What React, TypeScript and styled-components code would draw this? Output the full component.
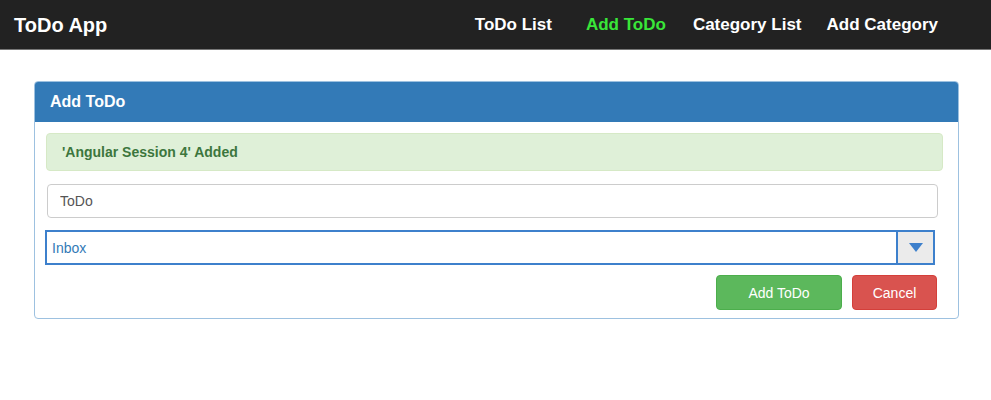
import React from "react";
import styled, { createGlobalStyle } from "styled-components";

const Global = createGlobalStyle`
  html, body { margin: 0; padding: 0; background: #fff; }
  body { font-family: "Liberation Sans", Arial, sans-serif; font-size: 14px; color: #333; }
  * { box-sizing: border-box; }
`;

const NavBar = styled.nav`
  height: 50px;
  background: #222;
  border-bottom: 1px solid #777;
  display: flex;
  align-items: center;
  padding: 1px 0 0 14px;
`;

const Brand = styled.div`
  color: #fff;
  font-weight: bold;
  font-size: 20px;
  flex: 1;
`;

const NavLinks = styled.div`
  display: flex;
  align-items: center;
  padding-right: 53px;
`;

const NavLink = styled.a<{ $active?: boolean; $gap: number }>`
  color: ${(p) => (p.$active ? "#39e639" : "#fff")};
  font-weight: bold;
  font-size: 17px;
  text-decoration: none;
  margin-left: ${(p) => p.$gap}px;
`;

const Container = styled.main`
  padding: 31px 32px 0 34px;
`;

const Panel = styled.section`
  border: 1px solid #9dc1e0;
  border-radius: 4px;
  overflow: hidden;
`;

const PanelHeading = styled.div`
  background: #337ab7;
  color: #fff;
  font-weight: bold;
  font-size: 16px;
  height: 40px;
  display: flex;
  align-items: center;
  padding-left: 15px;
`;

const PanelBody = styled.div`
  padding: 11px 15px 8px 11px;
  display: flex;
  flex-direction: column;
`;

const Alert = styled.div`
  background: #dff0d8;
  border: 1px solid #d6e9c6;
  border-radius: 4px;
  color: #3c763d;
  font-weight: bold;
  height: 38px;
  display: flex;
  align-items: center;
  padding-left: 15px;
`;

const TextInput = styled.input`
  margin: 13px 5px 0 1px;
  height: 34px;
  border: 1px solid #ccc;
  border-radius: 4px;
  padding: 0 12px;
  font-family: inherit;
  font-size: 14px;
  color: #555;
  outline: none;
`;

const SelectBox = styled.div`
  margin: 12px 8px 0 -1px;
  height: 35px;
  border: 2px solid #3d80cc;
  display: flex;
  align-items: stretch;
`;

const SelectValue = styled.div`
  flex: 1;
  display: flex;
  align-items: center;
  padding-left: 5px;
  color: #337ab7;
  font-size: 14px;
`;

const ArrowBox = styled.div`
  width: 37px;
  background: #ebebeb;
  border-left: 2px solid #3d80cc;
  display: flex;
  align-items: center;
  justify-content: center;
`;

const Actions = styled.div`
  display: flex;
  justify-content: flex-end;
  gap: 10px;
  margin: 10px 6px 0 0;
`;

const Button = styled.button<{ $variant: "success" | "danger"; $width: number }>`
  width: ${(p) => p.$width}px;
  height: 35px;
  border-radius: 4px;
  border: 1px solid ${(p) => (p.$variant === "success" ? "#4cae4c" : "#d43f3a")};
  background: ${(p) => (p.$variant === "success" ? "#5cb85c" : "#d9534f")};
  color: #fff;
  font-family: inherit;
  font-size: 14px;
  padding: 0;
`;

export default function App() {
  return (
    <>
      <Global />
      <NavBar>
        <Brand>ToDo App</Brand>
        <NavLinks>
          <NavLink $gap={0}>ToDo List</NavLink>
          <NavLink $gap={34} $active>
            Add ToDo
          </NavLink>
          <NavLink $gap={27}>Category List</NavLink>
          <NavLink $gap={25}>Add Category</NavLink>
        </NavLinks>
      </NavBar>
      <Container>
        <Panel>
          <PanelHeading>Add ToDo</PanelHeading>
          <PanelBody>
            <Alert>'Angular Session 4' Added</Alert>
            <TextInput defaultValue="ToDo" />
            <SelectBox>
              <SelectValue>Inbox</SelectValue>
              <ArrowBox>
                <svg width="14" height="9" viewBox="0 0 14 9">
                  <polygon points="0,0 14,0 7,9" fill="#3d80cc" />
                </svg>
              </ArrowBox>
            </SelectBox>
            <Actions>
              <Button $variant="success" $width={126}>
                Add ToDo
              </Button>
              <Button $variant="danger" $width={85}>
                Cancel
              </Button>
            </Actions>
          </PanelBody>
        </Panel>
      </Container>
    </>
  );
}
